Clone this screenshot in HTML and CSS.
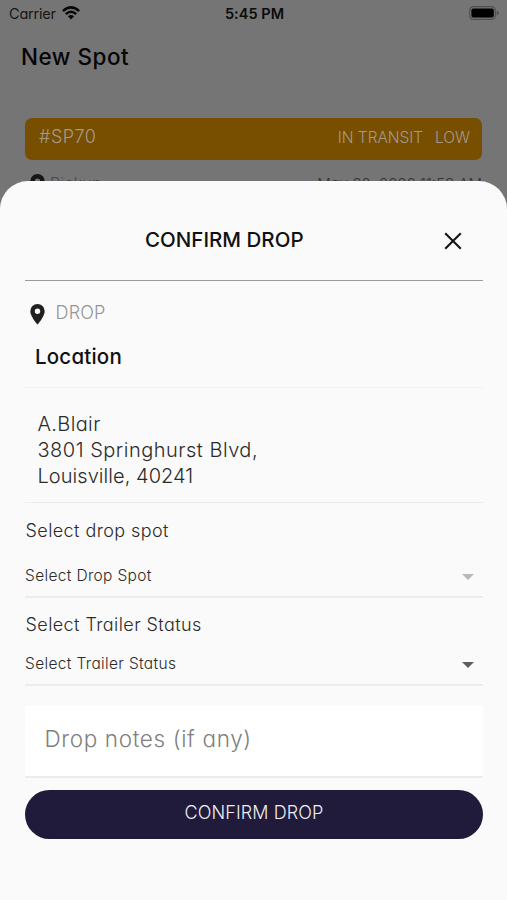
FILE: index.html
```html
<!DOCTYPE html>
<html lang="en">
<head>
<meta charset="utf-8">
<title>New Spot</title>
<link rel="stylesheet" href="styles.css">
</head>
<body>
<div class="screen">
  <div class="backdrop">
    <div class="status-bar">
      <div class="carrier"><span class="carrier-name">Carrier</span>
        <svg class="wifi" width="18" height="14" viewBox="0 0 18 14" fill="none" stroke="#080808" stroke-width="2.5"><path d="M.9 5.1Q9-2.3 17.1 5.1M3.8 8.1Q9 3.5 14.2 8.1"/><path d="M9 13.4 5.9 10.3Q9 7.7 12.1 10.3Z" fill="#080808" stroke="none"/></svg>
      </div>
      <span class="clock">5:45 PM</span>
      <svg class="battery" width="31" height="14" viewBox="0 0 31 14"><rect x=".7" y=".7" width="25.6" height="12.6" rx="3.6" fill="none" stroke="#505050" stroke-width="1.2"/><rect x="2.4" y="2.4" width="22.4" height="9.2" rx="1.8"/><path d="M27.7 4.6q2 .7 2 2.4t-2 2.4z" fill="#505050"/></svg>
    </div>
    <h1 class="page-title"><span>New Spot</span></h1>
    <div class="spot-bar"><span class="spot-id">#SP70</span><span class="spot-state">IN TRANSIT</span><span class="spot-priority">LOW</span></div>
    <div class="pickup">
      <svg class="pin" width="15" height="21" viewBox="0 0 15 21"><path fill="#161616" fill-rule="evenodd" d="M7.5 0A7.2 7.2 0 0 0 .3 7.2C.3 12.5 7.5 20.6 7.5 20.6S14.7 12.5 14.7 7.2A7.2 7.2 0 0 0 7.5 0Zm0 4.6a2.7 2.7 0 1 1 0 5.4 2.7 2.7 0 0 1 0-5.4Z"/></svg>
      <span class="pickup-label">Pickup</span><span class="pickup-date">May 20, 2022 11:58 AM</span>
    </div>
  </div>
  <div class="sheet">
    <div class="sheet-head">
      <h2 class="sheet-title">CONFIRM DROP</h2>
      <svg class="close" width="18" height="18" viewBox="0 0 18 18" fill="none" stroke="#151515" stroke-width="2.1"><path d="m1.2 1.2 15.6 15.6M16.8 1.2 1.2 16.8"/></svg>
    </div>
    <div class="drop">
      <svg class="pin" width="15" height="21" viewBox="0 0 15 21"><path fill="#202020" fill-rule="evenodd" d="M7.5 0A7.2 7.2 0 0 0 .3 7.2C.3 12.5 7.5 20.6 7.5 20.6S14.7 12.5 14.7 7.2A7.2 7.2 0 0 0 7.5 0Zm0 4.6a2.7 2.7 0 1 1 0 5.4 2.7 2.7 0 0 1 0-5.4Z"/></svg>
      <span class="drop-label">DROP</span>
    </div>
    <h3 class="location"><span>Location</span></h3>
    <div class="address">
      <div class="line-name">A.Blair</div>
      <div class="line-street">3801 Springhurst Blvd,</div>
      <div class="line-city">Louisville, 40241</div>
    </div>
    <div class="label label-spot">Select drop spot</div>
    <div class="select select-spot"><span>Select Drop Spot</span><svg width="12" height="6" viewBox="0 0 12 6"><path d="M0 0h12L6 6z" fill="#b9b9b9"/></svg></div>
    <div class="label label-status">Select Trailer Status</div>
    <div class="select select-status"><span>Select Trailer Status</span><svg width="12" height="6" viewBox="0 0 12 6"><path d="M0 0h12L6 6z" fill="#5e5e5e"/></svg></div>
    <div class="notes"><span>Drop notes (if any)</span></div>
    <div class="confirm"><span>CONFIRM DROP</span></div>
  </div>
</div>
</body>
</html>
```

FILE: styles.css
```css
* { box-sizing: border-box; }
body { margin: 0; font-family: Inter, "Liberation Sans", sans-serif; font-feature-settings: "cv11"; color: #2b2b2b; }
h1, h2, h3 { margin: 0; font-weight: 500; }
svg { display: block; flex: none; }
.screen { width: 507px; height: 900px; overflow: hidden; background: #757575; white-space: nowrap; }
.backdrop { height: 181px; overflow: hidden; }

.status-bar { height: 28px; padding: 0 7px 0 9px; display: grid; grid-template-columns: 1fr auto 1fr; align-items: center; color: #161616; font-size: 14.5px; }
.carrier { display: flex; align-items: center; gap: 6px; }
.carrier-name { letter-spacing: -.2px; position: relative; top: -1px; }
.wifi { margin-top: -2px; }
.clock { font-weight: 600; letter-spacing: .05px; color: #0b0b0b; position: relative; top: -1px; }
.battery { justify-self: end; margin-top: -2px; }

.page-title { height: 90px; padding-left: 21px; font-size: 22.5px; line-height: 58px; letter-spacing: .5px; color: #060606; }
.spot-bar { height: 42px; margin: 0 25px; padding: 0 12px 3px 14px; border-radius: 7px; background: #784f00; display: flex; align-items: center; color: #a39a8a; font-weight: 300; }
.spot-id { font-size: 18px; flex: 1; letter-spacing: .5px; margin-top: -2px; }
.spot-state, .spot-priority { font-size: 15.5px; letter-spacing: -.05px; }
.spot-priority { margin-left: 12px; }
.pickup { height: 21px; margin: 14px 25px 0 30px; display: flex; align-items: flex-start; line-height: 19px; font-weight: 300; }
.pickup-label { font-size: 16px; margin-left: 5px; flex: 1; color: #484848; letter-spacing: .3px; }
.pickup-date { font-size: 15px; color: #333; }

.sheet { height: 719px; padding: 0 24px 0 25px; border-radius: 28px 28px 0 0; background: #fafafa; display: flex; flex-direction: column; }
.sheet-head { height: 100px; flex: none; padding: 18px 21px 0 120px; border-bottom: 1px solid #9a9a9a; display: flex; align-items: center; justify-content: space-between; }
.sheet-title { font-size: 20.5px; line-height: 24px; letter-spacing: .02px; color: #111; }
.close { margin-top: 3px; }
.drop { height: 53px; padding: 0 0 0 5px; line-height: 63px; display: flex; }
.drop .pin { margin-top: 23px; }
.drop-label { margin-left: 10.5px; font-size: 18px; letter-spacing: .2px; font-weight: 350; color: #959595; }
.location { height: 54px; padding-left: 10px; font-size: 20.5px; letter-spacing: .2px; line-height: 46px; color: #111; border-bottom: 1px solid #f0f0f0; }
.address { height: 115px; padding: 23px 0 0 12.5px; border-bottom: 1px solid #ededed; font-size: 20px; font-weight: 350; line-height: 26px; }
.line-name { letter-spacing: .36px; }
.line-street { letter-spacing: .5px; }
.line-city { letter-spacing: .05px; }
.label { padding-left: .5px; font-size: 18px; font-weight: 350; letter-spacing: .42px; line-height: 24px; }
.label-spot { margin-top: 16px; }
.select { border-bottom: 2px solid #ececec; display: flex; align-items: center; justify-content: space-between; padding-right: 9px; font-size: 15.5px; font-weight: 350; letter-spacing: .34px; }
.select-spot { height: 55px; padding-top: 12px; }
.label-status { margin-top: 15px; }
.select-status { height: 49px; padding-top: 6px; }
.select svg { margin-top: 2px; }
.notes { height: 72px; margin-top: 20px; padding-left: 19.5px; background: #fff; border-bottom: 2px solid #ececec; line-height: 66px; font-size: 22.5px; font-weight: 350; letter-spacing: .64px; color: #808080; }
.confirm { height: 49px; margin-top: 12px; border-radius: 25px; background: #201b3b; color: #eeeef3; text-align: center; line-height: 46px; font-size: 18px; letter-spacing: .1px; font-weight: 350; }
```
